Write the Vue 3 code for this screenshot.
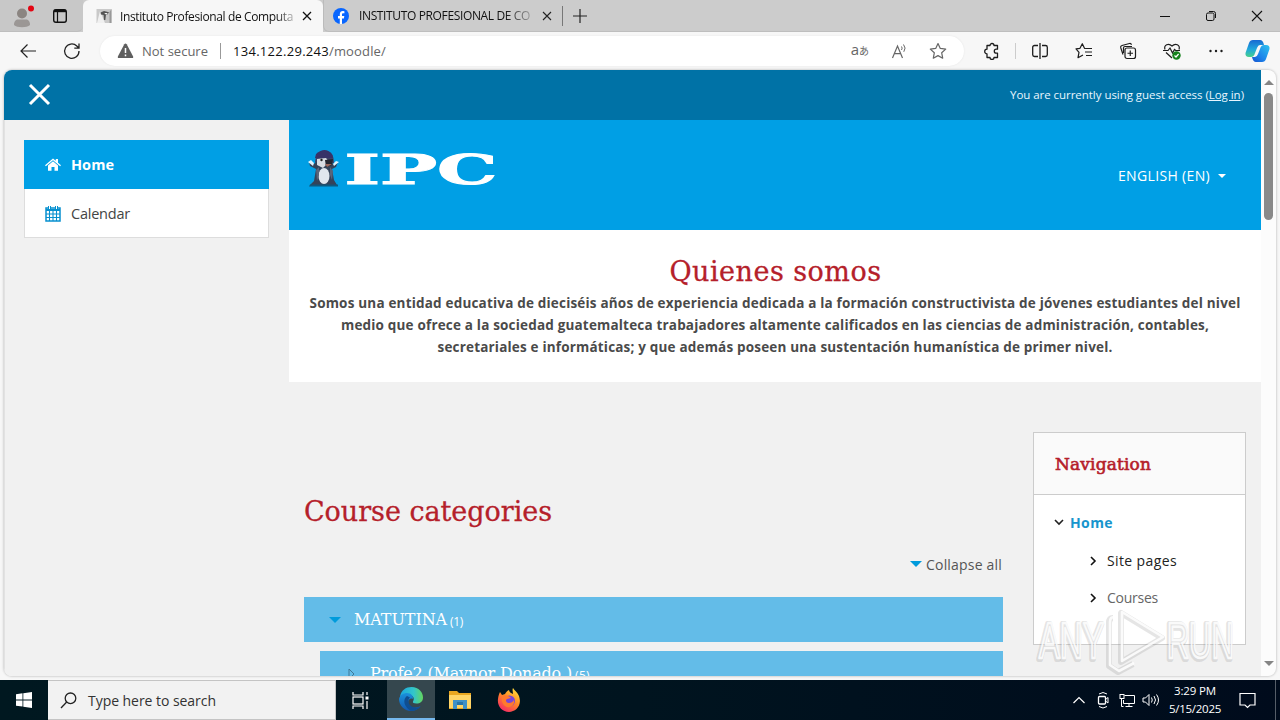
<script setup>
// Spreads a label's letters so that it takes exactly the given width.
const vFit = {
  mounted(el, { value }) {
    const width = el.getBoundingClientRect().width
    el.style.letterSpacing = (value - width) / el.textContent.length + 'px'
  }
}

const intro = [
  { text: 'Somos una entidad educativa de dieciséis años de experiencia dedicada a la formación constructivista de jóvenes estudiantes del nivel', width: 931 },
  { text: 'medio que ofrece a la sociedad guatemalteca trabajadores altamente calificados en las ciencias de administración, contables,', width: 868 },
  { text: 'secretariales e informáticas; y que además poseen una sustentación humanística de primer nivel.', width: 675 }
]
</script>

<template>
  <div class="screen">
    <div class="tabs">
      <div class="tools">
        <svg class="avatar" width="28" height="28" viewBox="0 0 28 28">
          <circle cx="14" cy="10.500" r="5" fill="#8b8581" />
          <path d="M6 22c0-4 2-5.500 4-5.500h8c2 0 4 1.500 4 5.500-3 3-13 3-16 0z" fill="#9b9795" />
          <circle cx="23" cy="5.500" r="3" fill="#e30613" />
        </svg>
        <svg width="16" height="16" viewBox="0 0 16 16" fill="none" stroke="#111">
          <rect x="1.700" y="1.700" width="12.600" height="12.600" rx="2.200" stroke-width="1.400" />
          <path d="M2 3h12" stroke-width="2.400" /><path d="M5.500 4v10" stroke-width="1.200" />
        </svg>
      </div>
      <div class="tab active">
        <svg width="16" height="16" viewBox="0 0 16 16">
          <rect x=".5" y="1" width="15" height="14" fill="#c9c9c9" /><path d="M1 15L4 3l5 12z" fill="#f0f0f0" />
          <path d="M4.500 4.500L8 3l5 1.200-1.500 2.300H10L9.300 12H8L7.600 7 5 6.500z" fill="#555" /><path d="M8.300 5h3v1.300h-2z" fill="#eee" /><path d="M13.500 4v11h2V1z" fill="#999" />
        </svg>
        <div class="tab-title"><span v-fit="173">Instituto Profesional de Computa</span></div>
        <svg class="close" width="10" height="10" viewBox="0 0 10 10"><path d="M1 1l8 8M9 1L1 9" stroke="#111" stroke-width="1.300" /></svg>
      </div>
      <div class="tab second">
        <svg width="16" height="16" viewBox="0 0 16 16">
          <circle cx="8" cy="8" r="8" fill="#0866ff" />
          <path d="M6.800 16v-5.500H5V8h1.800V6.500C6.800 4 8 3 10 3l1.400.15v2.100h-1C9.300 5.250 9 5.800 9 6.600V8h2.300l-.4 2.500H9V16z" fill="#fff" />
        </svg>
        <div class="tab-title grey"><span v-fit="171">INSTITUTO PROFESIONAL DE CO</span></div>
        <svg class="close" width="10" height="10" viewBox="0 0 10 10"><path d="M1 1l8 8M9 1L1 9" stroke="#222" stroke-width="1.100" /></svg>
      </div>
      <div class="newtab"><svg width="14" height="14" viewBox="0 0 14 14"><path d="M7 0v14M0 7h14" stroke="#222" stroke-width="1.200" /></svg></div>
      <div class="winbtns">
        <div><svg width="12" height="12" viewBox="0 0 12 12"><path d="M1 6.500h10" stroke="#111" /></svg></div>
        <div><svg width="12" height="12" viewBox="0 0 12 12" fill="none" stroke="#111"><rect x="1.500" y="3" width="7.500" height="7.500" rx="1.500" /><path d="M4 1.500h4.500a2 2 0 0 1 2 2V8" /></svg></div>
        <div><svg width="12" height="12" viewBox="0 0 12 12"><path d="M1 1l10 10M11 1L1 11" stroke="#111" stroke-width="1.100" /></svg></div>
      </div>
    </div>

    <div class="toolbar">
      <svg class="back" width="18" height="16" viewBox="0 0 18 16" fill="none" stroke="#222" stroke-width="1.200"><path d="M17 8H2M8.500 1.500L2 8l6.500 6.500" /></svg>
      <svg class="reload" width="18" height="18" viewBox="0 0 18 18" fill="none" stroke="#222" stroke-width="1.300"><path d="M16 9A7.200 7.200 0 1 1 13.800 4l1.700 1.800M16 1.500v4.700h-4.700" /></svg>
      <div class="address">
        <svg width="17" height="16" viewBox="0 0 17 16"><path d="M7.300 1.200q1.200-1.600 2.400 0l6.300 12q.8 1.800-1 1.800H2q-1.800 0-1-1.800z" fill="#5f5f5f" /><path d="M8.500 5v5M8.500 11.500v1.700" stroke="#fff" stroke-width="1.500" /></svg>
        <span class="insecure"><span v-fit="66">Not secure</span></span>
        <i class="rule"></i>
        <span class="url"><span v-fit="96">134.122.29.243</span><span v-fit="57" class="path">/moodle/</span></span>
        <span class="grow"></span>
        <span class="translate">a<b>あ</b></span>
        <svg class="aloud" width="18" height="16" viewBox="0 0 18 16" fill="none" stroke="#666"><path d="M1.500 15L6.500 3l5 12M3.300 10.700h6.500" stroke-width="1.200" /><path d="M10.500 3.500q1.300 1.500 0 3.500M12.500 1.500q3 3.500.3 7.300" /></svg>
        <svg class="star" width="18" height="18" viewBox="0 0 18 18" fill="none" stroke="#666" stroke-width="1.200"><path d="M9 1.500l2.300 4.900 5.400.7-4 3.700 1 5.400L9 13.600l-4.700 2.600 1-5.400-4-3.700 5.400-.7z" stroke-linejoin="round" /></svg>
      </div>
      <div class="ext"><svg width="18" height="18" viewBox="0 0 18 18" fill="none" stroke="#1d1d1d" stroke-width="1.300"><path d="M5.500 3.500H7a2 2 0 0 1 4 0h3.500v3.700h-1.200a2 2 0 0 0 0 4h1.200v4.300H11a2 2 0 0 1-4 0H4v-3.700a2.300 2.300 0 0 1 0-4.600V3.500z" stroke-linejoin="round" /></svg></div>
      <i class="rule light"></i>
      <div class="actions">
        <div><svg width="18" height="18" viewBox="0 0 18 18" fill="none" stroke="#1d1d1d" stroke-width="1.300"><path d="M7 3.500H3.500A1.800 1.800 0 0 0 1.700 5.300v7.400a1.800 1.800 0 0 0 1.800 1.800H7M11 3.500h3.500a1.800 1.800 0 0 1 1.800 1.800v7.400a1.800 1.800 0 0 1-1.800 1.800H11M9 1v16" /></svg></div>
        <div><svg width="18" height="18" viewBox="0 0 18 18" fill="none" stroke="#1d1d1d" stroke-width="1.200"><path d="M11 6.500L9.500 6.300 7.300 1.700 5 6.300l-4 .5 3 3.500-1 5.400 5-2.800M11 6.500h6M10 10h7M11 13.500h6" stroke-linejoin="round" /></svg></div>
        <div><svg width="18" height="18" viewBox="0 0 18 18" fill="none" stroke="#1d1d1d" stroke-width="1.200"><rect x="6" y="6" width="10.500" height="10.500" rx="2" /><path d="M11.250 8.500v5.500M8.500 11.250H14M4 12.500L1.700 5.700Q1.300 4 3 3.500L10.500 1.500q1.500-.3 2 1.200M4.500 11V6q0-1.500 1.500-1.500h7" /></svg></div>
        <div><svg width="18" height="18" viewBox="0 0 18 18" fill="none" stroke="#1d1d1d" stroke-width="1.200"><path d="M2 7.500C.5 3 5.500.5 9 4 12.500.5 17.500 3 16 7.500M0 8.500h5L7 6l2.500 5 2-3.500 1.200 1H17M3 10.500l6 5.500" /><circle cx="13.500" cy="13.500" r="4.200" fill="#16821d" stroke="none" /><path d="M11.500 13.500l1.500 1.500 2.600-3" stroke="#fff" /></svg></div>
        <div><svg width="18" height="18" viewBox="0 0 18 18" fill="#1d1d1d"><circle cx="3.500" cy="9" r="1.200" /><circle cx="9" cy="9" r="1.200" /><circle cx="14.500" cy="9" r="1.200" /></svg></div>
      </div>
      <svg class="copilot" width="25" height="24" viewBox="0 0 25 24">
        <defs>
          <linearGradient id="cpA" x1="0" y1="0" x2="0" y2="1"><stop offset="0" stop-color="#1769d2" /><stop offset=".55" stop-color="#20a8dc" /><stop offset="1" stop-color="#48d08c" /></linearGradient>
          <linearGradient id="cpB" x1="1" y1="0" x2="0" y2="1"><stop offset="0" stop-color="#2dc3ef" /><stop offset=".6" stop-color="#1c82ea" /><stop offset="1" stop-color="#1654ce" /></linearGradient>
        </defs>
        <path d="M8 1h7q3 0 4 5h-4q-2 0-3 3l-2 5q-1 4-4 4H4q-4 0-3.500-4L4 4q1-3 4-3z" fill="url(#cpA)" />
        <path d="M17 23h-6q-3 0-4-5h3q2 0 3-3l2-5q1-4 4-4h2q4 0 3.500 4L21 20q-1 3-4 3z" fill="url(#cpB)" />
      </svg>
    </div>

    <div class="view">
      <div class="page">
        <div class="topbar">
          <svg width="23" height="23" viewBox="0 0 23 23"><path d="M2 2l19 19M21 2L2 21" stroke="#fff" stroke-width="3" /></svg>
          <div class="guest"><span v-fit="234">You are currently using guest access (<u>Log in</u>)</span></div>
        </div>
        <div class="body">
          <div class="side">
            <div class="menu">
              <div class="item on">
                <svg width="16" height="14" viewBox="0 0 16 14" fill="#fff"><path d="M8 3.200l5 4.300v5.300H9.500V9h-3v3.800H3V7.500z" /><path d="M8 .5l2.800 2.300V1H13v3.700l3 2.500-.9 1L8 2.300.9 8.200 0 7.200z" /></svg>
                <b v-fit="43">Home</b>
              </div>
              <div class="item">
                <svg width="16" height="17" viewBox="0 0 16 17" fill="none" stroke="#0790cf"><rect x="1" y="3" width="14" height="13" stroke-width="1.500" /><path d="M1 5h14" stroke-width="2" /><path d="M1 9h14M1 12.500h14M4.500 6v10M8 6v10M11.500 6v10" stroke-width="1.100" /><path d="M4.500 1v3M11.500 1v3" stroke-width="3" /><path d="M4.500 1v3M11.500 1v3" stroke="#fff" stroke-width="1" /></svg>
                <span v-fit="59">Calendar</span>
              </div>
            </div>
          </div>
          <div class="main">
            <div class="hero">
              <svg class="logo" width="192" height="60" viewBox="0 0 192 60">
                <path d="M1 14l5 2 4-5h11l4 5 5-2-2 5-4 2 2 11 3 5H2l4-4 2-12-6-3z" fill="#34435a" />
                <path d="M7 14q1-10 11-11 8 1 8 12z" fill="#3d4066" /><path d="M8 6q9-8 16 0l1 4H7z" fill="#373268" />
                <path d="M9 11l9-1 3 4-6 6-6-3z" fill="#d8dce3" /><path d="M17 12l8-1-1 6-6 2z" fill="#252530" /><circle cx="13.500" cy="12" r="1.200" fill="#222" /><path d="M17 16l7 0-5 3z" fill="#9a665c" />
                <ellipse cx="16" cy="28" rx="5.500" ry="8" fill="#e0e6ee" /><path d="M0 14l3-2 3 3-1 3zM31 14l-3-1-3 3 1 2z" fill="#dff3ff" /><path d="M8 22l3-3v8l-2 6zM22 19l3 4-1 9-2-5z" fill="#59647a" /><path d="M2 36.500h28v2H1z" fill="#0e597f" />
                <text x="36.500" y="36" textLength="153" lengthAdjust="spacingAndGlyphs" class="ipc">IPC</text>
              </svg>
              <div class="lang"><span v-fit="92">ENGLISH (EN)</span><i></i></div>
            </div>
            <div class="about">
              <h1><span v-fit="212">Quienes somos</span></h1>
              <p v-for="line in intro" :key="line.text"><span v-fit="line.width">{{ line.text }}</span></p>
            </div>
            <div class="columns">
              <div class="courses">
                <h2><span v-fit="248">Course categories</span></h2>
                <div class="collapse"><i class="down"></i><span v-fit="76">Collapse all</span></div>
                <div class="cat"><i class="down"></i><span v-fit="93">MATUTINA</span><small v-fit="13">(1)</small></div>
                <div class="cat sub"><svg width="7" height="12" viewBox="0 0 7 12"><path d="M1 1l5 5-5 5z" fill="none" stroke="#3f7897" /></svg><span v-fit="202">Profe2 (Maynor Donado )</span><small v-fit="15">(5)</small></div>
              </div>
              <div class="nav">
                <div class="nav-head"><span v-fit="96">Navigation</span></div>
                <div class="nav-body">
                  <div class="home"><svg width="10" height="7" viewBox="0 0 10 7"><path d="M1 1l4 4 4-4" fill="none" stroke="#222" stroke-width="1.600" /></svg><b v-fit="43">Home</b></div>
                  <div class="leaf dark"><svg width="7" height="10" viewBox="0 0 7 10"><path d="M1 1l4 4-4 4" fill="none" stroke="#111" stroke-width="1.600" /></svg><span v-fit="70">Site pages</span></div>
                  <div class="leaf"><svg width="7" height="10" viewBox="0 0 7 10"><path d="M1 1l4 4-4 4" fill="none" stroke="#111" stroke-width="1.600" /></svg><span v-fit="51">Courses</span></div>
                </div>
              </div>
            </div>
          </div>
        </div>
      </div>
      <div class="scroll"><i class="up"></i><i class="thumb"></i><i class="grow"></i><i class="dn"></i></div>
    </div>

    <div class="taskbar">
      <div class="start"><svg width="16" height="16" viewBox="0 0 16 16" fill="#fff"><path d="M0 2.200L6.500 1.300v6.200H0zM7.300 1.200L16 0v7.500H7.300zM0 8.400h6.500v6.200L0 13.700zM7.300 8.400H16V16l-8.700-1.200z" /></svg></div>
      <div class="search">
        <svg width="17" height="17" viewBox="0 0 17 17" fill="none" stroke="#222" stroke-width="1.300"><circle cx="10.500" cy="6.300" r="5.300" /><path d="M6.700 10L1 16" /></svg>
        <span v-fit="128">Type here to search</span>
      </div>
      <div class="app view-btn"><svg width="17" height="17" viewBox="0 0 17 17" fill="none" stroke="#fff" stroke-width="1.200"><path d="M1 0v3h10V0M1 17v-3h10v3M15 0v3M15 9v8" /><rect x="1" y="5" width="10" height="7" /><path d="M13.500 6h3" stroke-width="3" /></svg></div>
      <div class="app edge">
        <svg width="24" height="24" viewBox="0 0 24 24">
          <defs>
            <linearGradient id="egA" x1="0" y1="0" x2="1" y2="0"><stop offset="0" stop-color="#1ba7e0" /><stop offset=".6" stop-color="#33c6ca" /><stop offset="1" stop-color="#64d65d" /></linearGradient>
            <linearGradient id="egB" x1="0" y1="0" x2="0" y2="1"><stop offset="0" stop-color="#1a91dc" /><stop offset="1" stop-color="#1257ad" /></linearGradient>
          </defs>
          <path d="M1 10C2 3 7 0 12.500 0 20 0 24 5.500 24 10.500c0 4-3 6-6.500 6-3 0-4-1-3.500-2 2-3 0-6.500-4-7C6 7 2 9 1 13z" fill="url(#egA)" />
          <path d="M0 12c1-4 4.500-6 8-6 4 0 6.500 3 6 6-4-2-6 3-4 6 3 4 8 3 11.500 1C19 22.500 16 24 12 24 5 24 0 18 0 12z" fill="url(#egB)" />
          <path d="M8 9c-4 3-4 10 3 14.500 4 1 8-.5 11-4.500-4 2.500-9 2-11.500-1.500C9 15 9 12 11 10.500z" fill="#0f4e91" />
        </svg>
      </div>
      <div class="app gap"><svg width="22" height="20" viewBox="0 0 22 20"><path d="M0 1h8l2 2h12v16H0z" fill="#e9a720" /><path d="M0 5h22v13H0z" fill="#ffd567" /><path d="M4 10h14v9h-4v-4H8v4H4z" fill="#3f91c7" /><path d="M8 12h6v3H8z" fill="#2874a8" /></svg></div>
      <div class="app gap">
        <svg width="24" height="24" viewBox="0 0 24 24">
          <defs><linearGradient id="ff" x1=".8" y1="0" x2=".2" y2="1"><stop offset="0" stop-color="#ffe13c" /><stop offset=".45" stop-color="#ff8a25" /><stop offset="1" stop-color="#f5236a" /></linearGradient></defs>
          <path d="M3 4l2 3 3-1c1-2 2-3 4-4 0 2 2 3 4 4 0-2-1-4 0-6 2 3 4 4 5.500 7C26 17 19 24 12 24 5 24 0 18 1 11c.3-3 1-5 2-7z" fill="url(#ff)" />
          <circle cx="12.500" cy="13" r="5.500" fill="#7846d8" /><path d="M5 8c4-2 7 0 9 2l-4 1c-2 1-1 4 2 4 2 0 4-1 5-3 1 5-3 8-7 7-4-1-6-6-5-11z" fill="#ff7a2d" />
        </svg>
      </div>
      <span class="grow"></span>
      <div class="tray">
        <div><svg width="14" height="8" viewBox="0 0 14 8"><path d="M1.500 7L7 1.500 12.500 7" fill="none" stroke="#fff" stroke-width="1.200" /></svg></div>
        <div><svg width="14" height="18" viewBox="0 0 14 18" fill="none" stroke="#fff"><rect x="2.500" y="5.500" width="7" height="7.500" rx="1" stroke-width="1.300" /><path d="M9.500 8.500l2.500-2v5.500l-2.500-2M3 3q4-3 8 0M3 15.500q4 3 8 0" /></svg></div>
        <div><svg width="17" height="15" viewBox="0 0 17 15" fill="none" stroke="#fff"><path d="M5.500 2.500h10v8h-11V7M10 10.500v3M6.500 13.500h7M2.500 5v8.500h2" /><rect x="1" y="1.500" width="4" height="4" /></svg></div>
        <div><svg width="18" height="14" viewBox="0 0 18 14" fill="none" stroke="#fff"><path d="M1 5h2.500L7 1.500v11L3.500 9H1zM9.500 4.500q1.500 2.500 0 5M12 3q3 4 0 8M14.500 1.500q4 5.500 0 11" /></svg></div>
      </div>
      <div class="clock"><span v-fit="42">3:29 PM</span><span v-fit="52">5/15/2025</span></div>
      <div class="note"><svg width="17" height="17" viewBox="0 0 17 17"><path d="M1 1.500h15v11.500h-5L8.500 15.500 6 13H1z" fill="none" stroke="#fff" stroke-width="1.200" /></svg></div>
      <i class="peek"></i>
    </div>

    <svg class="mark" width="206" height="74" viewBox="0 0 206 74">
      <g class="shade" transform="translate(-1 1)">
        <text x="3" y="53" textLength="65" lengthAdjust="spacingAndGlyphs">ANY</text>
        <path d="M86 7v49l41-24zM78 12q-4 0-4 5v43l9 6 15-8" />
        <text x="131" y="53" textLength="67" lengthAdjust="spacingAndGlyphs">RUN</text>
      </g>
      <g class="lite">
        <text x="3" y="53" textLength="65" lengthAdjust="spacingAndGlyphs">ANY</text>
        <path d="M86 7v49l41-24zM78 12q-4 0-4 5v43l9 6 15-8" />
        <text x="131" y="53" textLength="67" lengthAdjust="spacingAndGlyphs">RUN</text>
      </g>
    </svg>
  </div>
</template>

<style>
html, body { margin: 0; overflow: hidden; }
</style>

<style scoped>
* { box-sizing: border-box; }
.screen { position: relative; width: 1280px; height: 720px; display: flex; flex-direction: column; overflow: hidden; background: #f7f7f7; font-family: "Open Sans", "Noto Sans", "Noto Sans CJK JP", sans-serif; white-space: nowrap; }
svg { display: block; flex: none; }
i { display: block; flex: none; }
span, b, small { flex: none; }
.grow { flex: 1; }
.tabs { height: 32px; flex: none; display: flex; background: #ccc; }
.tools { width: 83px; display: flex; align-items: center; gap: 16px; padding-left: 8px; background: #c8c8c8; border-radius: 0 0 6px 0; border-bottom: 1px solid #bebebe; }
.avatar { margin-top: 2px; }
.tab { display: flex; align-items: center; font-size: 12px; color: #111; }
.tab.active { width: 240px; background: #f7f7f7; border-radius: 6px 6px 0 0; padding-left: 13px; }
.tab.second { width: 239px; padding-left: 9px; border-bottom: 1px solid #bebebe; border-left: 1px solid #bbb; border-radius: 0 0 0 6px; }
.tab-title { width: 174px; margin-left: 8px; mask-image: linear-gradient(90deg, #000 156px, transparent 180px); }
.tab-title.grey { width: 173px; margin-left: 10px; mask-image: linear-gradient(90deg, #000 146px, transparent 180px); }
.close { margin-left: 8px; }
.second .close { margin-left: 10px; }
.newtab { flex: 1; display: flex; align-items: center; border-bottom: 1px solid #bebebe; }
.newtab::before { content: ""; height: 20px; border-left: 1px solid #777; margin-right: 10px; }
.winbtns { display: flex; border-bottom: 1px solid #bebebe; }
.winbtns div { width: 46px; display: flex; align-items: center; justify-content: center; }
.toolbar { height: 38px; flex: none; display: flex; align-items: center; background: #f7f7f7; }
.back { margin-left: 19px; }
.reload { margin-left: 26px; }
.address { width: 864px; height: 30px; margin-left: 19px; border-radius: 15px; background: #fff; display: flex; align-items: center; padding-left: 17px; font-size: 13px; box-shadow: 0 0 2px #e4e4e4; }
.insecure { width: 78px; margin-left: 8px; color: #666; }
.rule { height: 16px; border-left: 1px solid #999; }
.url { margin-left: 12px; color: #111; }
.url .path { color: #666; }
.translate { color: #666; font-size: 15px; line-height: 15px; margin: -3px 0 0; }
.translate b { font: 400 10px "Noto Sans CJK JP", sans-serif; }
.aloud { margin-left: 22px; }
.star { margin: 0 17px 0 20px; }
.ext { width: 51px; padding-left: 19px; }
.rule.light { border-color: #ccc; }
.actions { display: flex; margin-left: 2px; }
.actions div { width: 44px; display: flex; justify-content: center; }
.copilot { margin-left: 7px; }
.view { height: 606px; flex: none; margin: 0 4px 4px; display: flex; border-radius: 8px; overflow: hidden; background: #fcfcfc; box-shadow: 0 0 2px 1px #d4d4d4; }
.page { width: 1257px; display: flex; flex-direction: column; background: #f1f1f1; overflow: hidden; }
.topbar { height: 50px; flex: none; display: flex; justify-content: space-between; align-items: center; background: #0072a6; padding: 0 17px 2px 24px; }
.guest { color: #e8f6ff; font-size: 11.500px; }
.body { flex: 1; display: flex; min-height: 0; }
.side { width: 285px; flex: none; padding: 20px; border-left: 1px solid #e2e2e2; }
.menu { width: 245px; margin-left: -1px; border: 1px solid #ddd; border-top: 0; background: #fff; }
.item { height: 48px; display: flex; align-items: center; gap: 10px; padding-left: 20px; font-size: 14.500px; color: #444; }
.item.on { height: 49px; margin: 0 -1px; padding-left: 21px; color: #fff; background: #009fe5; }
.main { width: 972px; flex: none; display: flex; flex-direction: column; }
.hero { height: 110px; flex: none; background: #009fe5; display: flex; justify-content: space-between; padding: 28px 35px 0 19px; }
.ipc { font: 700 41px "DejaVu Serif", serif; fill: #fff; stroke: #fff; stroke-width: 1px; }
.lang { display: flex; align-items: center; gap: 8px; height: 55px; color: #fff; font-size: 14px; }
.lang i { border: 4px solid transparent; border-top-color: #fff; border-bottom: 0; }
.about { height: 152px; flex: none; padding-top: 22px; background: #fff; text-align: center; color: #4a4a4a; }
h1, h2, p { margin: 0; }
h1, h2 { font: 400 27px/40px "DejaVu Serif", serif; color: #b5202a; -webkit-text-stroke: .3px #b5202a; }
h1 span { margin-left: 1px; }
p { font-size: 13.500px; font-weight: 700; line-height: 22px; }
.columns { display: flex; align-items: flex-start; gap: 30px; padding: 50px 15px 0; }
.courses { width: 699px; padding-top: 60px; }
.collapse { display: flex; align-items: center; justify-content: flex-end; gap: 4px; height: 32px; margin: 16px 1px 17px 0; color: #555; font-size: 14px; }
.down { border: 6px solid transparent; border-top-color: #009bdc; border-bottom: 0; }
.cat { height: 45px; display: flex; align-items: center; padding-left: 25px; margin-bottom: 9px; background: #63bce8; color: #fff; font: 400 16px "DejaVu Serif", serif; }
.cat span { margin-left: 13px; }
.cat small { margin: 4px 0 0 3px; font: 12px "Open Sans", sans-serif; }
.cat.sub { margin-left: 16px; padding-left: 28px; }
.cat.sub span { margin-left: 15px; }
.nav { width: 213px; height: 213px; border: 1px solid #ccc; background: #fff; }
.nav-head { height: 62px; display: flex; align-items: center; padding-left: 21px; background: #fafafa; border-bottom: 1px solid #ccc; font: 400 17px "DejaVu Serif", serif; color: #b5202a; -webkit-text-stroke: .6px #b5202a; }
.nav-body { padding: 8px 0 0 20px; font-size: 14px; }
.home { height: 39px; padding-bottom: 1px; display: flex; align-items: center; gap: 6px; color: #1795cd; }
.leaf { height: 37px; display: flex; align-items: center; gap: 10px; padding-left: 36px; color: #666; }
.leaf.dark { color: #222; }
.scroll { width: 15px; display: flex; flex-direction: column; align-items: center; padding: 10px 0 10px; }
.up { border: 5px solid transparent; border-bottom-color: #858585; border-top: 0; }
.thumb { width: 9px; height: 127px; margin-top: 8px; border-radius: 5px; background: #8a8a8a; }
.dn { border: 5px solid transparent; border-top-color: #858585; border-bottom: 0; }
.taskbar { height: 40px; flex: none; display: flex; background: linear-gradient(90deg, #001820, #00141f 50%, #000b1c); color: #fff; }
.start { width: 48px; display: flex; align-items: center; justify-content: center; }
.search { width: 288px; display: flex; align-items: center; gap: 11px; padding-left: 12px; background: #f2f2f2; border: 1px solid #c4c4c4; border-left: 0; color: #333; font-size: 14px; }
.app { width: 48px; display: flex; align-items: center; justify-content: center; }
.edge { margin-left: 3px; background: #35474e; border-bottom: 2px solid #76b9ed; }
.gap { margin-left: 1px; }
.tray { display: flex; }
.tray div { width: 24px; display: flex; align-items: center; justify-content: center; }
.clock { width: 64px; display: flex; flex-direction: column; align-items: center; justify-content: center; font-size: 11.500px; line-height: 18px; }
.note { width: 40px; display: flex; align-items: center; justify-content: center; }
.peek { width: 5px; margin: 0 0 0 8px; border-left: 1px solid #555d68; }
.mark { position: absolute; left: 1036px; top: 605px; font: 400 50px "Liberation Sans", sans-serif; fill: none; }
.shade { stroke: #888; stroke-opacity: .22; stroke-width: 6px; stroke-linejoin: round; }
.lite { stroke: #fff; stroke-opacity: .85; stroke-width: 2.600px; stroke-linejoin: round; }
</style>
